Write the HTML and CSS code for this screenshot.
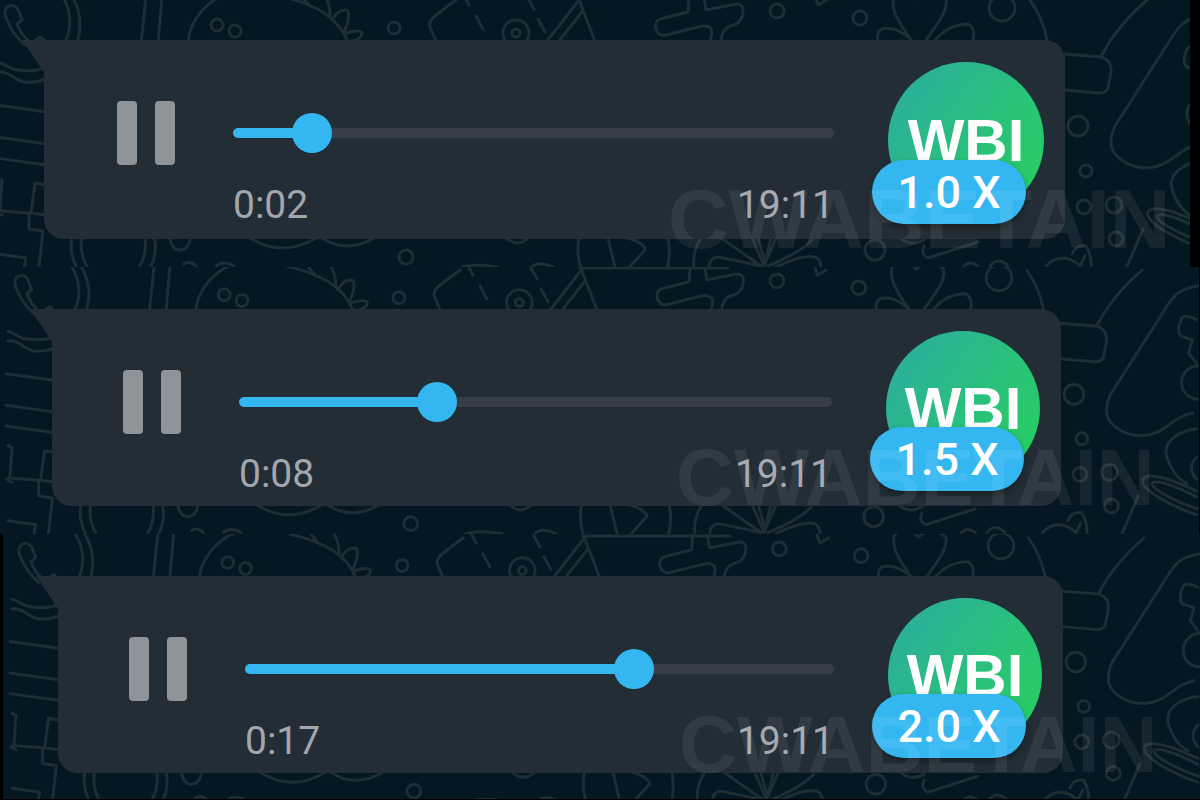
FILE: index.html
```
<!DOCTYPE html>
<html lang="en">

<head>
    <meta charset="UTF-8">
    <meta name="viewport" content="width=device-width, initial-scale=1.0">
    <title>Voice message speed</title>
    <link rel="stylesheet" href="styles.css">
</head>

<body>
    <svg class="defs" aria-hidden="true">
        <defs>
            <g id="doodles">
                <!-- phone in a speech bubble -->
                <path d="M9 6c-5 2-5 8-2 14 4 10 10 18 18 25M9 6c5-2 9 2 10 6l3 8-5 4c3 7 6 13 12 17M35 41l5-4 5 4" />
                <path d="M59-8c12 14 14 34 6 50M69-8c12 16 14 36 7 52M-2 62c8 2 12 8 20 8q14 2 28-2M-2 72c10-2 16 8 26 10q12 1 22-3" />
                <path d="M-4 105l50 7M-4 137l50 7M-4 158l50 7" />
                <path d="M-2 178l4 2-2 30-3 2M46 185l-11-2-4 30 15 2M-2 213l4 2M2 211l27 2v16l14 2-4 36M-2 254l28 4-2 10" />
                <path d="M146-4l-5 48M162-4l-4 48" />
                <!-- dinosaur -->
                <path d="M188 42C190 20 206 2 226-6M280-4c34 8 58 20 68 46M298-8l12 14M318-12q12 10 12 28M332 20q8-13 16-9 2 8-4 21M346 33q14-4 16 0 0 6-10 8" />
                <circle cx="217" cy="25" r="6" />
                <circle cx="235" cy="31" r="6" />
                <circle cx="394" cy="28" r="6" />
                <!-- ticket and compass -->
                <path d="M456 0l-20 15q-8 6-6 12l6 14M462-8l7 13M476 16l7 13M528-2l6 11M538 19l7 13" />
                <circle cx="516" cy="33" r="13" />
                <circle cx="516" cy="33" r="4" />
                <path d="M547 41l32-41 16 41M559 41l23-29M577-2h150" />
                <!-- plane -->
                <path d="M689-2l-1 14-28 7q-6 3-4 10 3 8 10 6l36-9q10-1 10 7l-2 9M704-2l2 12 30-6q8 0 7 8-1 10-9 13-12 2-13 16" />
                <circle cx="777" cy="11" r="7" />
                <circle cx="860" cy="18" r="7" />
                <circle cx="1002" cy="8" r="13" />
                <path d="M815-4l3 9 9-5" />
                <!-- flower -->
                <path d="M912 41C898 22 890 8 894-3q12-12 24 2 14-12 28 0c2 14-10 26-20 41M908 37q-14-11-26-8-6 3-4 12M936 39q14-15 32-15 8 4 5 16" />
                <!-- bottle -->
                <path d="M1030 0q13 18 17 40M1147 0q-30 26-45 55M1064 54l38 3q10 4 9 15l-3 16q-2 5-9 5l-35-3" />
                <!-- gamepad -->
                <path d="M1204 16c-18 3-24 8-32 21l-57 89q-8 18 0 28 12 14 33 14c24-2 30-20 50-23" />
                <path d="M1202 50q-12-6-15-1-6 14 0 18l11 4-4 13 8 10" />
                <circle cx="1204" cy="114" r="17" />
                <circle cx="1078" cy="126" r="10" />
                <circle cx="1086" cy="171" r="6" />
                <circle cx="1084" cy="207" r="7" />
                <circle cx="1114" cy="205" r="8" />
                <circle cx="1116" cy="239" r="7" />
                <!-- ufo -->
                <path d="M1202 161c-20 2-34 14-30 28q6 20 20 27M1202 190q-10 10 0 22M1202 224c-24-12-50-20-54-12-4 10 30 28 54 36M1202 230c-22-12-42-18-45-14 0 6 22 18 46 26M1143 229l-17 40" />
                <!-- bottom edge of the tile -->
                <path d="M72 236q-3 18 5 32M82 236q-3 17 5 31M145 236q2 18-5 30M154 236q4 16-3 30M170 238q2 12 10 12t10-10M184 264q6-4 12 2M216 266q8-6 18 0M250 238q32 20 66 0M322 238q24 16 52 0" />
                <path d="M506 238q12 10 22 0M460 268q12-5 38-1M531 268q6-8 22-1M579 238q-3 16 2 30M608 238l7 29M628 238q18 6 17 12l-20 22M668 238q3 18-1 30M701 238q-9 14-7 30M709 268q0-10 8-11 12 2 44 9l-40-28M752 238l12 28 12-28M758 238l7 24 6-24M768 266q30-12 44-26M776 267q34-16 42-8 4 4 2 12" />
                <circle cx="406" cy="257" r="7" />
                <circle cx="875" cy="250" r="10" />
                <path d="M898 236q12 12 26 4M924 246q-4 8 4 12l50-16M964 266q6-6 14 0M990 266q8-10 18 0M1046 266q16-16 34 0l5-10M1072 254q4-10 14-8 6 10 5 22" />
            </g>
        </defs>
    </svg>

    <main class="chat">
        <section class="row row-1">
            <svg class="wallpaper" aria-hidden="true"><use href="#doodles" /></svg>
            <div class="bubble">
                <button class="pause" type="button" aria-label="Pause"><span></span><span></span></button>
                <div class="player">
                    <input class="seek" type="range" min="0" max="1000" value="105" style="--pos: 0.105" aria-label="Position">
                    <div class="times"><span>0:02</span><span>19:11</span></div>
                </div>
                <div class="avatar">
                    WBI
                    <button class="speed" type="button">1.0 X</button>
                </div>
            </div>
            <div class="watermark">CWABETAIN</div>
        </section>

        <section class="row row-2">
            <svg class="wallpaper" aria-hidden="true"><use href="#doodles" transform="translate(10 3) scale(.987)" /></svg>
            <div class="bubble">
                <button class="pause" type="button" aria-label="Pause"><span></span><span></span></button>
                <div class="player">
                    <input class="seek" type="range" min="0" max="1000" value="321" style="--pos: 0.321" aria-label="Position">
                    <div class="times"><span>0:08</span><span>19:11</span></div>
                </div>
                <div class="avatar">
                    WBI
                    <button class="speed" type="button">1.5 X</button>
                </div>
            </div>
            <div class="watermark">CWABETAIN</div>
        </section>

        <section class="row row-3">
            <svg class="wallpaper" aria-hidden="true"><use href="#doodles" transform="translate(11 4) scale(.985)" /></svg>
            <div class="bubble">
                <button class="pause" type="button" aria-label="Pause"><span></span><span></span></button>
                <div class="player">
                    <input class="seek" type="range" min="0" max="1000" value="672" style="--pos: 0.672" aria-label="Position">
                    <div class="times"><span>0:17</span><span>19:11</span></div>
                </div>
                <div class="avatar">
                    WBI
                    <button class="speed" type="button">2.0 X</button>
                </div>
            </div>
            <div class="watermark">CWABETAIN</div>
        </section>
    </main>

    <script>
        document.querySelectorAll('.seek').forEach((seek) => {
            seek.addEventListener('input', () => {
                seek.style.setProperty('--pos', seek.value / seek.max);
            });
        });
    </script>
</body>

</html>
```
FILE: styles.css
```
* {
    box-sizing: border-box;
    margin: 0;
    padding: 0;
}

body {
    background: #000;
    font-family: Roboto, "Liberation Sans", sans-serif;
}

.defs {
    position: absolute;
    width: 0;
    height: 0;
}

#doodles {
    fill: none;
    stroke: #1d2e35;
    stroke-width: 3;
    stroke-linecap: round;
    stroke-linejoin: round;
}

.chat {
    display: grid;
    grid-template-rows: repeat(3, 1fr);
    min-height: 100vh;
}

.row {
    position: relative;
    overflow: hidden;
    background: #051720;
}

.row-1 {
    margin-right: 10px;
    padding: 40px 125px 27px 44px;
}

.row-2 {
    margin-right: 1px;
    padding: 42px 138px 26px 52px;
}

.row-3 {
    margin: 0 0 2px 3px;
    padding: 42px 137px 26px 55px;
}

.wallpaper {
    position: absolute;
    top: 0;
    left: 0;
    width: 100%;
    height: 100%;
}

.bubble {
    position: relative;
    display: flex;
    align-items: flex-start;
    padding: 22px 21px 8px 71px;
    border-radius: 20px;
    border-top-left-radius: 0;
    background: #222d35;
}

.row-1 .bubble {
    padding-bottom: 10px;
    padding-left: 73px;
}

/* tail */
.bubble::before {
    content: "";
    position: absolute;
    top: 0;
    left: -22px;
    width: 23px;
    height: 34px;
    background: #222d35;
    clip-path: polygon(0 0, 100% 0, 100% 100%);
}

.pause {
    display: flex;
    justify-content: space-between;
    width: 58px;
    height: 64px;
    margin-top: 39px;
    margin-right: 58px;
    border: none;
    background: none;
    cursor: pointer;
}

.pause span {
    width: 20px;
    height: 100%;
    border-radius: 4px;
    background: #8f9499;
}

.player {
    flex: 1;
    min-width: 0;
    padding-top: 51px;
}

.seek {
    display: block;
    width: 100%;
    height: 40px;
    appearance: none;
    -webkit-appearance: none;
    background: none;
    cursor: pointer;
}

.seek::-webkit-slider-runnable-track {
    height: 10px;
    border-radius: 5px;
    background: linear-gradient(#34b7f1, #34b7f1) no-repeat #363f48;
    background-size: calc(20px + (100% - 40px) * var(--pos)) 100%;
}

.seek::-webkit-slider-thumb {
    -webkit-appearance: none;
    width: 40px;
    height: 40px;
    margin-top: -15px;
    border-radius: 50%;
    background: #34b7f1;
}

.times {
    display: flex;
    justify-content: space-between;
    margin-top: 28px;
    font-size: 39px;
    line-height: 48px;
    color: #a2a6ad;
}

.avatar {
    position: relative;
    display: flex;
    align-items: center;
    justify-content: center;
    width: 154px;
    height: 154px;
    margin-left: 54px;
    border-radius: 50%;
    background: linear-gradient(125deg, #2bb198 15%, #28ce62 90%);
    color: #fff;
    font-family: "Liberation Sans", Arial, sans-serif;
    font-size: 60px;
    font-weight: bold;
}

.row-1 .avatar {
    width: 156px;
    height: 156px;
}

.speed {
    position: absolute;
    left: -16px;
    bottom: -6px;
    width: 154px;
    height: 64px;
    border: none;
    border-radius: 32px;
    background: #34b7f1;
    box-shadow: 0 3px 6px rgba(0, 0, 0, 0.35);
    color: #fff;
    font-family: Roboto, "Liberation Sans", sans-serif;
    font-size: 45px;
    font-weight: 500;
    cursor: pointer;
}

.watermark {
    position: absolute;
    top: 171px;
    left: 676px;
    color: rgba(255, 255, 255, 0.07);
    font-family: "Liberation Sans", Arial, sans-serif;
    font-size: 80px;
    font-weight: bold;
    line-height: 80px;
    white-space: nowrap;
    pointer-events: none;
}

.row-1 .watermark {
    top: 179px;
    left: 668px;
    font-size: 84px;
}
```
